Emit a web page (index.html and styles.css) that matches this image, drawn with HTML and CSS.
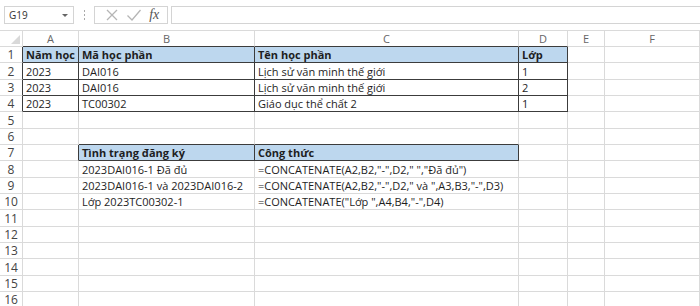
FILE: index.html
```html
<!DOCTYPE html>
<html lang="vi">
<head>
<meta charset="utf-8">
<title>Excel CONCATENATE</title>
<link rel="stylesheet" href="styles.css">
</head>
<body>
<div class="toolbar">
  <div class="namebox"><span class="ref">G19</span><span class="caret"></span></div>
  <div class="grip"><i></i><i></i><i></i></div>
  <div class="actions">
    <svg class="ico" width="14" height="14" viewBox="0 0 14 14"><path d="M2 2 L12 12 M12 2 L2 12" stroke="#b5b5b5" stroke-width="1.3" fill="none"/></svg>
    <svg class="ico" width="16" height="14" viewBox="0 0 16 14"><path d="M1.5 7.5 L6 12 L14.5 2" stroke="#b5b5b5" stroke-width="1.3" fill="none"/></svg>
    <span class="fx">fx</span>
  </div>
  <div class="input"></div>
</div>
<table class="sheet">
  <colgroup>
    <col class="w-h"><col class="w-a"><col class="w-b"><col class="w-c"><col class="w-d"><col class="w-e"><col class="w-f">
  </colgroup>
  <tr class="hdr">
    <td class="corner"><span class="tri"></span></td>
    <td class="ch bb">A</td><td class="ch bb">B</td><td class="ch bb">C</td><td class="ch bb">D</td><td class="ch">E</td><td class="ch">F</td>
  </tr>
  <tr><td class="rh br">1</td><td class="c h d">Năm học</td><td class="c h d">Mã học phần</td><td class="c h d">Tên học phần</td><td class="c h d">Lớp</td><td class="c"></td><td class="c"></td></tr>
  <tr><td class="rh br">2</td><td class="c d">2023</td><td class="c d">DAI016</td><td class="c d">Lịch sử văn minh thế giới</td><td class="c d">1</td><td class="c"></td><td class="c"></td></tr>
  <tr><td class="rh br">3</td><td class="c d">2023</td><td class="c d">DAI016</td><td class="c d">Lịch sử văn minh thế giới</td><td class="c d">2</td><td class="c"></td><td class="c"></td></tr>
  <tr><td class="rh br">4</td><td class="c d">2023</td><td class="c d">TC00302</td><td class="c d">Giáo dục thể chất 2</td><td class="c d">1</td><td class="c"></td><td class="c"></td></tr>
  <tr><td class="rh">5</td><td class="c"></td><td class="c"></td><td class="c"></td><td class="c"></td><td class="c"></td><td class="c"></td></tr>
  <tr><td class="rh">6</td><td class="c"></td><td class="c bb"></td><td class="c bb"></td><td class="c"></td><td class="c"></td><td class="c"></td></tr>
  <tr><td class="rh">7</td><td class="c br"></td><td class="c h d">Tình trạng đăng ký</td><td class="c h d">Công thức</td><td class="c"></td><td class="c"></td><td class="c"></td></tr>
  <tr><td class="rh">8</td><td class="c"></td><td class="c">2023DAI016-1 Đã đủ</td><td class="c">=CONCATENATE(A2,B2,"-",D2," ","Đã đủ")</td><td class="c"></td><td class="c"></td><td class="c"></td></tr>
  <tr><td class="rh">9</td><td class="c"></td><td class="c">2023DAI016-1 và 2023DAI016-2</td><td class="c ov">=CONCATENATE(A2,B2,"-",D2," và ",A3,B3,"-",D3)</td><td class="c"></td><td class="c"></td><td class="c"></td></tr>
  <tr><td class="rh">10</td><td class="c"></td><td class="c">Lớp 2023TC00302-1</td><td class="c">=CONCATENATE("Lớp ",A4,B4,"-",D4)</td><td class="c"></td><td class="c"></td><td class="c"></td></tr>
  <tr><td class="rh">11</td><td class="c"></td><td class="c"></td><td class="c"></td><td class="c"></td><td class="c"></td><td class="c"></td></tr>
  <tr><td class="rh">12</td><td class="c"></td><td class="c"></td><td class="c"></td><td class="c"></td><td class="c"></td><td class="c"></td></tr>
  <tr><td class="rh">13</td><td class="c"></td><td class="c"></td><td class="c"></td><td class="c"></td><td class="c"></td><td class="c"></td></tr>
  <tr><td class="rh">14</td><td class="c"></td><td class="c"></td><td class="c"></td><td class="c"></td><td class="c"></td><td class="c"></td></tr>
  <tr><td class="rh">15</td><td class="c"></td><td class="c"></td><td class="c"></td><td class="c"></td><td class="c"></td><td class="c"></td></tr>
  <tr><td class="rh">16</td><td class="c"></td><td class="c"></td><td class="c"></td><td class="c"></td><td class="c"></td><td class="c"></td></tr>
</table>
</body>
</html>
```
FILE: styles.css
```css
html, body {
  margin: 0;
  padding: 0;
  background: #fff;
  overflow: hidden;
}
body {
  font-family: "Open Sans", "Liberation Sans", sans-serif;
  color: #1e1e1e;
}
.toolbar {
  height: 30px;
  display: flex;
  align-items: flex-start;
  padding-top: 6px;
  box-sizing: border-box;
  background: #fff;
}
.namebox {
  margin-left: 4px;
  width: 70px;
  height: 18px;
  box-sizing: border-box;
  border: 1px solid #d4d4d4;
  display: flex;
  align-items: center;
  justify-content: space-between;
  padding: 0 5px 0 4px;
}
.ref {
  font-size: 10px;
  color: #333;
}
.caret {
  width: 0;
  height: 0;
  border-left: 3px solid transparent;
  border-right: 3px solid transparent;
  border-top: 3px solid #666;
}
.grip {
  width: 20px;
  display: flex;
  flex-direction: column;
  align-items: center;
  gap: 2px;
  padding-top: 4px;
}
.grip i {
  width: 1px;
  height: 2px;
  background: #aaa;
}
.actions {
  width: 74px;
  height: 18px;
  box-sizing: border-box;
  border: 1px solid #d4d4d4;
  display: flex;
  align-items: center;
  justify-content: space-around;
  padding: 0 4px 0 6px;
}
.fx {
  font-family: "Liberation Serif", serif;
  font-style: italic;
  font-size: 14px;
  color: #555;
  line-height: 1;
}
.input {
  flex: 1;
  margin-left: 3px;
  height: 18px;
  box-sizing: border-box;
  border: 1px solid #d4d4d4;
  border-right: none;
}
.sheet {
  table-layout: fixed;
  border-collapse: separate;
  border-spacing: 0;
  width: 700px;
}
.w-h { width: 23px; }
.w-a { width: 56px; }
.w-b { width: 176px; }
.w-c { width: 264px; }
.w-d { width: 49px; }
.w-e { width: 37px; }
.w-f { width: 95px; }
.sheet tr { height: 16px; }
.sheet tr:nth-child(3n) { height: 17px; }
.sheet tr.hdr { height: 17px; }
.sheet td {
  padding: 0 3px;
  font-size: 11px;
  line-height: 14px;
  vertical-align: bottom;
  white-space: nowrap;
  overflow: hidden;
  border-right: 1px solid #dadada;
  border-bottom: 1px solid #dadada;
  box-sizing: border-box;
}
.sheet td.ov { overflow: visible; }
.corner {
  position: relative;
  border-top: 1px solid #dadada;
}
.tri {
  position: absolute;
  right: 2px;
  bottom: 2px;
  width: 0;
  height: 0;
  border-left: 9px solid transparent;
  border-bottom: 9px solid #d9d9d9;
}
.sheet td.ch {
  text-align: center;
  color: #666;
  font-size: 11px;
  vertical-align: middle;
  border-top: 1px solid #dadada;
}
.sheet td.rh {
  text-align: center;
  color: #444;
  font-size: 12px;
  padding: 0;
}
.sheet td.h {
  background: #bdd7ee;
  font-weight: bold;
}
.sheet td.d {
  border-right-color: #3c3c3c;
  border-bottom-color: #3c3c3c;
}
.sheet td.br { border-right-color: #3c3c3c; }
.sheet td.bb { border-bottom-color: #3c3c3c; }
```
